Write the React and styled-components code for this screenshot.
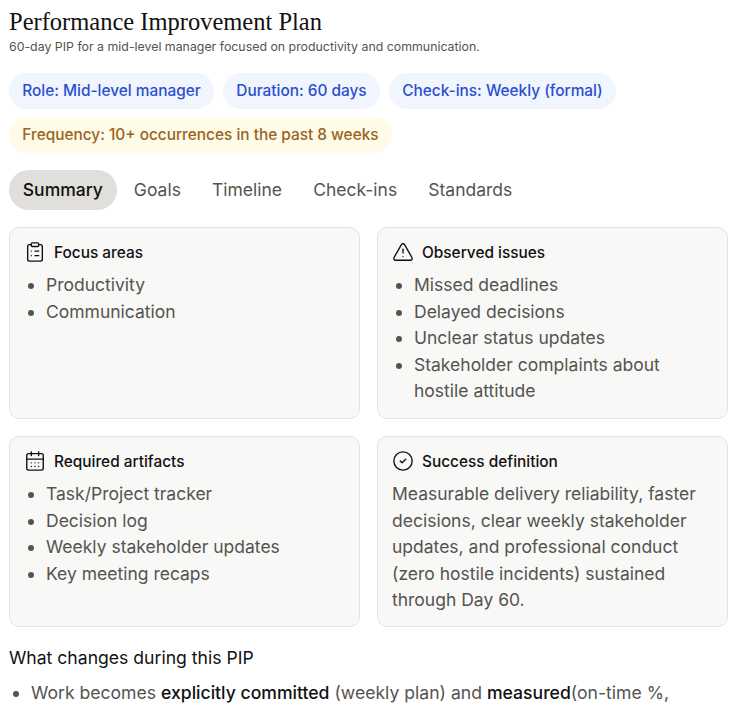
import React from 'react';
import styled, { createGlobalStyle } from 'styled-components';
import { ClipboardList, TriangleAlert, CalendarDays, CircleCheck } from 'lucide-react';

const GlobalStyle = createGlobalStyle`
  html, body {
    margin: 0;
    height: 100%;
    overflow: hidden;
    background: #fff;
  }
  body {
    font-family: Inter, "Liberation Sans", sans-serif;
  }
`;

const Page = styled.div`
  padding: 6px 6px 0 9px;
`;

const Title = styled.h1`
  margin: 0;
  font-family: "Liberation Serif", serif;
  font-size: 24.5px;
  line-height: 32px;
  font-weight: 400;
  color: #111;
`;

const Subtitle = styled.p`
  margin: 1px 0 0;
  font-size: 12.35px;
  line-height: 16px;
  color: #555350;
`;

const PillRow = styled.div`
  display: flex;
  flex-wrap: wrap;
  gap: 8px 9px;
  margin-top: 18px;
`;

const Pill = styled.span`
  box-sizing: border-box;
  height: 36px;
  display: inline-flex;
  align-items: center;
  padding: 0 13.3px 1px;
  border-radius: 18px;
  font-size: 15.4px;
  font-weight: 500;
  background: ${(props) => (props.$tone === 'amber' ? '#fefbe8' : '#f0f5fe')};
  color: ${(props) => (props.$tone === 'amber' ? '#9a6420' : '#2a4fd0')};
`;

const Tabs = styled.div`
  display: flex;
  gap: 3.5px;
  margin-top: 17px;
`;

const Tab = styled.div`
  box-sizing: border-box;
  height: 40px;
  display: flex;
  align-items: center;
  padding: 0 13.8px 1px;
  border-radius: 20px;
  font-size: 17.5px;
  font-weight: ${(props) => (props.$active ? 500 : 400)};
  color: ${(props) => (props.$active ? '#111' : '#555350')};
  background: ${(props) => (props.$active ? '#e0dfdb' : 'transparent')};
`;

const Grid = styled.div`
  display: grid;
  grid-template-columns: 351px 351px;
  grid-template-rows: 192px 191px;
  gap: 17px;
  margin-top: 17px;
`;

const Card = styled.section`
  box-sizing: border-box;
  background: #f8f8f6;
  border: 1px solid #e4e3df;
  border-radius: 10px;
  padding: 13px 14px;
`;

const CardHead = styled.div`
  display: flex;
  align-items: center;
  gap: 8px;
  height: 22px;
  font-size: 15.4px;
  font-weight: 500;
  color: #111;
`;

const CardList = styled.ul`
  margin: 9px 0 0;
  padding: 0 0 0 22px;
  font-size: 17.5px;
  line-height: 26.5px;
  color: #555350;
`;

const CardText = styled.p`
  margin: 9px 0 0;
  font-size: 17.5px;
  line-height: 26.5px;
  color: #555350;
`;

const SectionTitle = styled.h2`
  margin: 19px 0 0;
  font-size: 17.6px;
  line-height: 24px;
  font-weight: 400;
  color: #111;
`;

const ChangeList = styled.ul`
  margin: 10px 0 0;
  padding: 0 0 0 22px;
  font-size: 17.6px;
  line-height: 26px;
  color: #555350;

  strong {
    font-weight: 500;
    color: #111;
  }
`;

const cardIcon = { size: 22, strokeWidth: 1.5, color: '#111' };

export default function App() {
  return (
    <Page>
      <GlobalStyle />
      <Title>Performance Improvement Plan</Title>
      <Subtitle>60-day PIP for a mid-level manager focused on productivity and communication.</Subtitle>

      <PillRow>
        <Pill>Role: Mid-level manager</Pill>
        <Pill>Duration: 60 days</Pill>
        <Pill>Check-ins: Weekly (formal)</Pill>
        <Pill $tone="amber">Frequency: 10+ occurrences in the past 8 weeks</Pill>
      </PillRow>

      <Tabs>
        <Tab $active>Summary</Tab>
        <Tab>Goals</Tab>
        <Tab>Timeline</Tab>
        <Tab>Check-ins</Tab>
        <Tab>Standards</Tab>
      </Tabs>

      <Grid>
        <Card>
          <CardHead><ClipboardList {...cardIcon} />Focus areas</CardHead>
          <CardList>
            <li>Productivity</li>
            <li>Communication</li>
          </CardList>
        </Card>
        <Card>
          <CardHead><TriangleAlert {...cardIcon} />Observed issues</CardHead>
          <CardList>
            <li>Missed deadlines</li>
            <li>Delayed decisions</li>
            <li>Unclear status updates</li>
            <li>Stakeholder complaints about hostile attitude</li>
          </CardList>
        </Card>
        <Card>
          <CardHead><CalendarDays {...cardIcon} />Required artifacts</CardHead>
          <CardList>
            <li>Task/Project tracker</li>
            <li>Decision log</li>
            <li>Weekly stakeholder updates</li>
            <li>Key meeting recaps</li>
          </CardList>
        </Card>
        <Card>
          <CardHead><CircleCheck {...cardIcon} />Success definition</CardHead>
          <CardText>
            Measurable delivery reliability, faster decisions, clear weekly stakeholder updates, and
            professional conduct (zero hostile incidents) sustained through Day 60.
          </CardText>
        </Card>
      </Grid>

      <SectionTitle>What changes during this PIP</SectionTitle>
      <ChangeList>
        <li>
          Work becomes <strong>explicitly committed</strong> (weekly plan) and <strong>measured</strong>(on-time %,
        </li>
      </ChangeList>
    </Page>
  );
}
